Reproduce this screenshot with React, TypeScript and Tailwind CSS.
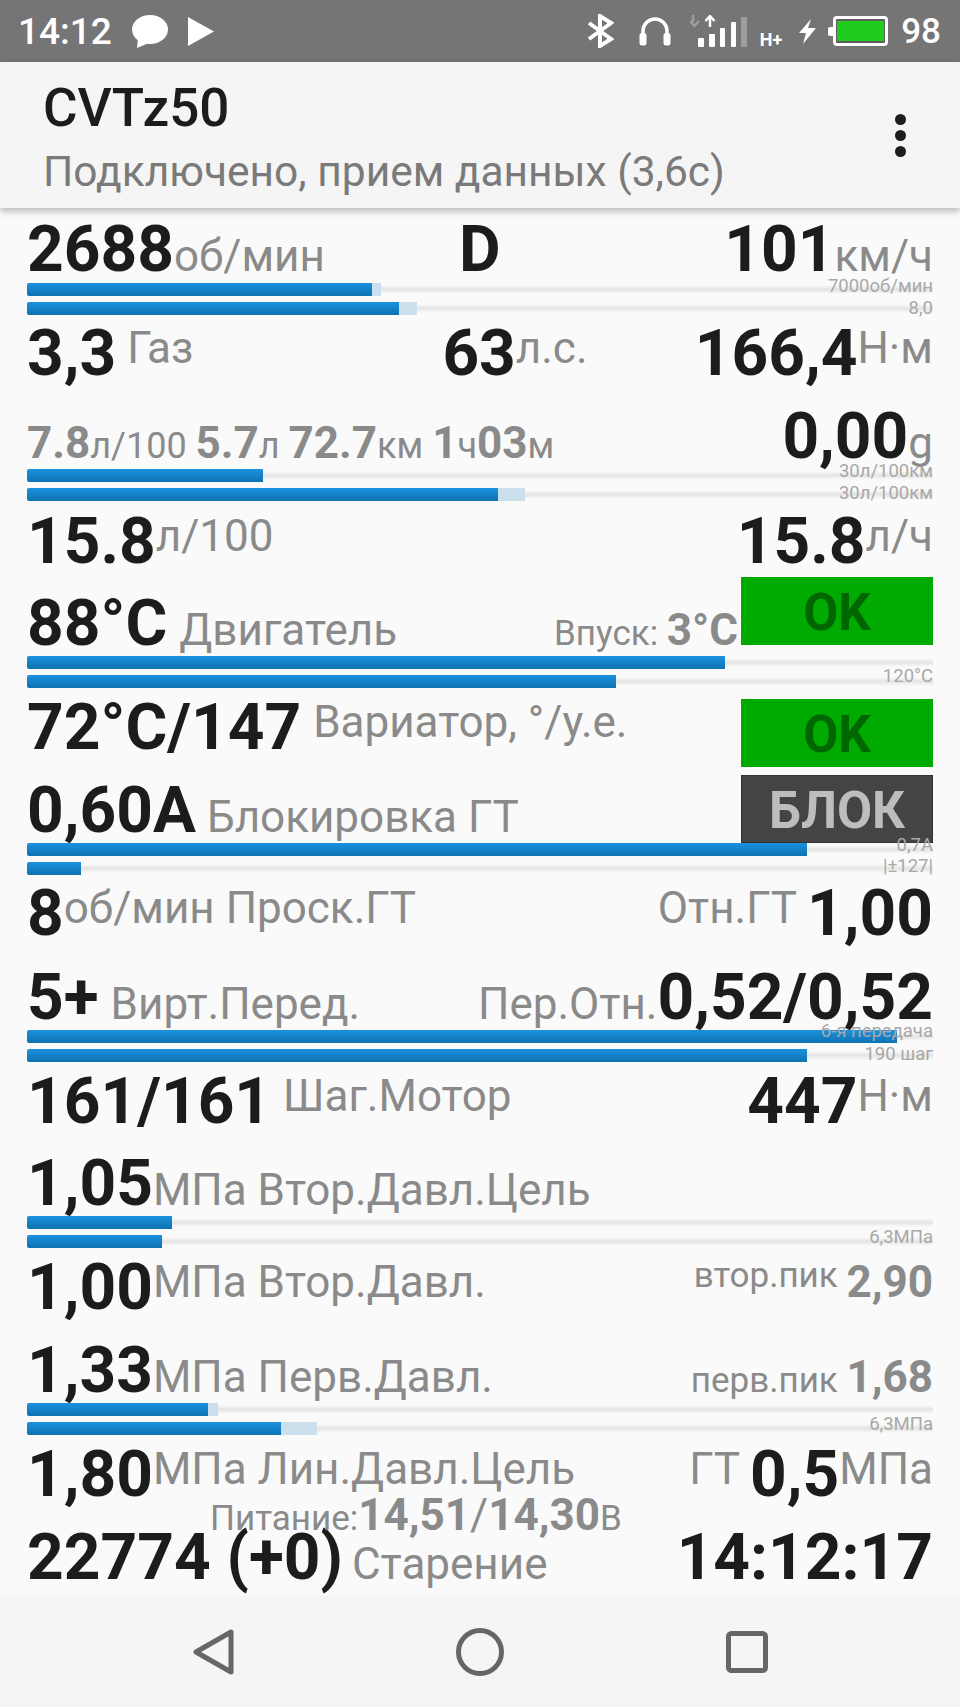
import type { ReactNode } from "react";

type BarData = {
  value: number;
  ghost?: number;
  label?: string;
  labelClass?: string;
};

const Big = ({ children }: { children: ReactNode }) => (
  <span className="text-[64px] font-bold text-[#1c1c1c] whitespace-pre">{children}</span>
);

const Unit = ({ children, className = "" }: { children: ReactNode; className?: string }) => (
  <span className={`text-[44px] text-[#8a8a8a] whitespace-pre ${className}`}>{children}</span>
);

const Mid = ({ children, className = "" }: { children: ReactNode; className?: string }) => (
  <span className={`text-[44px] font-bold text-[#8a8a8a] whitespace-pre ${className}`}>{children}</span>
);

const Small = ({ children }: { children: ReactNode }) => (
  <span className="text-[36px] text-[#8a8a8a] whitespace-pre">{children}</span>
);

const Note = ({ children, className = "" }: { children: ReactNode; className?: string }) => (
  <span className={`text-[35px] text-[#8a8a8a] whitespace-pre ${className}`}>{children}</span>
);

const Row = ({ h, children }: { h: string; children: ReactNode }) => (
  <div className={`relative flex items-baseline pt-[2px] leading-[62px] ${h}`}>{children}</div>
);

const Bar = ({ value, ghost, label, labelClass = "bottom-0" }: BarData) => (
  <div className="relative h-[13px]">
    <div className="absolute inset-x-0 top-[2px] h-[9px] bg-linear-to-b from-transparent via-[#e4e4e4] to-transparent" />
    {ghost && (
      <div className="absolute left-0 top-0 h-full bg-[#cbdfec] rounded-l-[2px]" style={{ width: ghost }} />
    )}
    <div
      className="absolute left-0 top-0 h-full rounded-l-[2px] bg-linear-to-b from-[#1b92de] to-[#0f72b2]"
      style={{ width: value }}
    />
    {label && (
      <span className={`absolute right-0 text-[18.5px] leading-[19px] text-[#a8a8a8] whitespace-pre ${labelClass}`}>
        {label}
      </span>
    )}
  </div>
);

const Bars = ({ h, top, bottom }: { h: string; top: BarData; bottom: BarData }) => (
  <div className={h}>
    <Bar {...top} />
    <div className="mt-[5.5px]">
      <Bar {...bottom} />
    </div>
  </div>
);

const Badge = ({ text, className }: { text: string; className: string }) => (
  <div
    className={`absolute right-0 flex h-[68px] w-[192px] items-center justify-center pt-[3px] text-[51px] leading-none font-bold ${className}`}
  >
    {text}
  </div>
);

const StatusIcons = () => (
  <div className="ml-auto flex items-center pr-[19px]">
    {/* bluetooth */}
    <svg width="27" height="34" viewBox="0 0 27 34" fill="none" stroke="#fff" strokeWidth="4">
      <path d="M2 9 L24 25 L13 32 V2 L24 9 L2 25" strokeLinejoin="miter" />
    </svg>
    {/* headphones */}
    <svg className="ml-[25px]" width="32" height="30" viewBox="0 0 32 30" fill="none">
      <path d="M4 20 V15 A12 12 0 0 1 28 15 V20" stroke="#fff" strokeWidth="3.5" />
      <rect x="0.5" y="17" width="7" height="12.5" rx="2.5" fill="#fff" />
      <rect x="24.5" y="17" width="7" height="12.5" rx="2.5" fill="#fff" />
    </svg>
    {/* signal with up and down arrows */}
    <svg className="ml-[19px]" width="57" height="32" viewBox="0 0 57 32">
      <path d="M3 0 V7 M0 6 L4.5 11 L9 6" stroke="#9d9d9d" strokeWidth="2.5" fill="none" />
      <path d="M20 12 V3 M15.5 6 L20 1 L24.5 6" stroke="#fff" strokeWidth="2.5" fill="none" />
      <rect x="8" y="23" width="6" height="9" rx="1" fill="#fff" />
      <rect x="19" y="19" width="6" height="13" rx="1" fill="#fff" />
      <rect x="30" y="13" width="5" height="19" rx="1" fill="#fff" />
      <rect x="41" y="7" width="5" height="25" rx="1" fill="#fff" />
      <rect x="51" y="2" width="6" height="30" rx="1" fill="#9d9d9d" />
    </svg>
    <span className="ml-[13px] mt-[16px] text-[18px] leading-[17px] font-bold text-white">H+</span>
    {/* charging bolt */}
    <svg className="ml-[17px]" width="17" height="25" viewBox="0 0 17 25" fill="#fff">
      <path d="M12 0 L0 14 H7 L4 25 L17 9 H9 Z" />
    </svg>
    {/* battery */}
    <div className="ml-[12px] flex items-center">
      <div className="h-[9px] w-[5px] rounded-l-[2px] bg-white" />
      <div className="flex h-[30px] w-[55px] items-center rounded-[4px] border-[3px] border-white bg-[#5e5e5e] pl-[1px]">
        <div className="h-[20px] w-[47px] bg-[#22cc1c]" />
      </div>
    </div>
    <span className="ml-[13px] text-[35px] leading-none font-medium text-white">98</span>
  </div>
);

const App = () => (
  <div className="flex h-[1707px] w-[960px] flex-col overflow-hidden bg-[#fafafa] font-['Roboto',sans-serif]">
    <div className="flex h-[62px] items-center bg-[#757575] pl-[18px]">
      <span className="text-[37px] leading-none font-medium text-white">14:12</span>
      <svg className="ml-[20px]" width="36" height="33" viewBox="0 0 36 33" fill="#fff">
        <ellipse cx="18" cy="14.5" rx="18" ry="14.5" />
        <path d="M6 23 L5 33 L17 28 Z" />
      </svg>
      <svg className="ml-[20px]" width="26" height="29" viewBox="0 0 26 29" fill="#fff">
        <path d="M0 0 L26 14.5 L0 29 Z" />
      </svg>
      <StatusIcons />
    </div>

    <div className="relative z-10 flex h-[146px] items-center justify-between bg-[#f5f5f5] pl-[43px] pr-[54px] shadow-[0_3px_7px_rgba(0,0,0,0.28)]">
      <div className="mt-[2px]">
        <div className="text-[53px] leading-[62px] font-medium text-[#1c1c1c]">CVTz50</div>
        <div className="mt-[9px] text-[42.5px] leading-[48px] text-[#7a7a7a] whitespace-pre">
          Подключено, прием данных (3,6с)
        </div>
      </div>
      <div className="flex flex-col gap-[5px]">
        <div className="size-[11px] rounded-full bg-[#1c1c1c]" />
        <div className="size-[11px] rounded-full bg-[#1c1c1c]" />
        <div className="size-[11px] rounded-full bg-[#1c1c1c]" />
      </div>
    </div>

    <div className="flex-1 px-[27px] pt-[9px]">
      <Row h="h-[66px]">
        <Big>2688</Big>
        <Unit>об/мин</Unit>
        <span className="ml-[134px]">
          <Big>D</Big>
        </span>
        <span className="ml-auto">
          <Big>101</Big>
        </span>
        <Unit>км/ч</Unit>
      </Row>
      <Bars
        h="h-[38px]"
        top={{ value: 345, ghost: 354, label: "7000об/мин" }}
        bottom={{ value: 372, ghost: 390, label: "8,0", labelClass: "bottom-[-3px]" }}
      />

      <Row h="h-[83px]">
        <Big>3,3</Big>
        <Unit className="ml-[11px] -translate-y-[12px]">Газ</Unit>
        <span className="ml-[249px]">
          <Big>63</Big>
        </span>
        <Unit className="-translate-y-[12px]">л.с.</Unit>
        <span className="ml-auto">
          <Big>166,4</Big>
        </span>
        <Unit className="-translate-y-[12px]">Н·м</Unit>
      </Row>
      <Row h="h-[65px]">
        <Mid>7.8</Mid>
        <Small>л/100 </Small>
        <Mid>5.7</Mid>
        <Small>л </Small>
        <Mid>72.7</Mid>
        <Small>км </Small>
        <Mid>1</Mid>
        <Small>ч</Small>
        <Mid>03</Mid>
        <Small>м</Small>
        <span className="ml-auto">
          <Big>0,00</Big>
        </span>
        <Unit>g</Unit>
      </Row>
      <Bars
        h="h-[40px]"
        top={{ value: 236, label: "30л/100км", labelClass: "bottom-[1px]" }}
        bottom={{ value: 471, ghost: 498, label: "30л/100км", labelClass: "bottom-[-2px]" }}
      />

      <Row h="h-[82px]">
        <Big>15.8</Big>
        <Unit className="-translate-y-[12px]">л/100</Unit>
        <span className="ml-auto">
          <Big>15.8</Big>
        </span>
        <Unit className="-translate-y-[12px]">л/ч</Unit>
      </Row>
      <Row h="h-[65px]">
        <Big>88°C</Big>
        <Unit className="ml-[12px]">Двигатель</Unit>
        <Note className="ml-auto">Впуск: </Note>
        <span className="mr-[195px] text-[44px] font-bold text-[#8a8a8a]">3°C</span>
        <Badge text="OK" className="top-[-14px] bg-[#00aa00] text-[#006600]" />
      </Row>
      <Bars
        h="h-[39px]"
        top={{ value: 698 }}
        bottom={{ value: 589, label: "120°C", labelClass: "bottom-[2px]" }}
      />

      <Row h="h-[83px]">
        <Big>72°C/147</Big>
        <Unit className="ml-[12px] -translate-y-[12px]">Вариатор, °/у.е.</Unit>
        <Badge text="OK" className="top-[4px] bg-[#00aa00] text-[#006600]" />
      </Row>
      <Row h="h-[65px]">
        <Big>0,60A</Big>
        <Unit className="ml-[11px]">Блокировка ГТ</Unit>
        <Badge text="БЛОК" className="top-[-3px] border border-[#333333] bg-[#444444] text-[#bdbdbd]" />
      </Row>
      <Bars
        h="h-[38px]"
        top={{ value: 780, label: "0,7A", labelClass: "bottom-[1px]" }}
        bottom={{ value: 54, label: "|±127|", labelClass: "bottom-[-1px]" }}
      />

      <Row h="h-[84px]">
        <Big>8</Big>
        <Unit className="-translate-y-[12px]">об/мин Проск.ГТ</Unit>
        <Unit className="ml-auto -translate-y-[12px]">Отн.ГТ </Unit>
        <Big>1,00</Big>
      </Row>
      <Row h="h-[65px]">
        <Big>5+</Big>
        <Unit className="ml-[12px]">Вирт.Перед.</Unit>
        <Unit className="ml-auto">Пер.Отн.</Unit>
        <Big>0,52/0,52</Big>
      </Row>
      <Bars
        h="h-[39px]"
        top={{ value: 870, label: "6-я передача", labelClass: "bottom-[2px]" }}
        bottom={{ value: 780, label: "190 шаг", labelClass: "bottom-[-2px]" }}
      />

      <Row h="h-[82px]">
        <Big>161/161</Big>
        <Unit className="ml-[12px] -translate-y-[12px]">Шаг.Мотор</Unit>
        <span className="ml-auto">
          <Big>447</Big>
        </span>
        <Unit className="-translate-y-[12px]">Н·м</Unit>
      </Row>
      <Row h="h-[65px]">
        <Big>1,05</Big>
        <Unit>МПа Втор.Давл.Цель</Unit>
      </Row>
      <Bars
        h="h-[39px]"
        top={{ value: 145 }}
        bottom={{ value: 135, label: "6,3МПа", labelClass: "bottom-[1px]" }}
      />

      <Row h="h-[83px]">
        <Big>1,00</Big>
        <Unit className="-translate-y-[12px]">МПа Втор.Давл.</Unit>
        <Note className="ml-auto -translate-y-[22px]">втор.пик </Note>
        <Mid className="-translate-y-[12px]">2,90</Mid>
      </Row>
      <Row h="h-[65px]">
        <Big>1,33</Big>
        <Unit>МПа Перв.Давл.</Unit>
        <Note className="ml-auto">перв.пик </Note>
        <Mid>1,68</Mid>
      </Row>
      <Bars
        h="h-[39px]"
        top={{ value: 181, ghost: 191 }}
        bottom={{ value: 254, ghost: 290, label: "6,3МПа", labelClass: "bottom-[1px]" }}
      />

      <Row h="h-[83px]">
        <Big>1,80</Big>
        <Unit className="-translate-y-[12px]">МПа Лин.Давл.Цель</Unit>
        <Unit className="ml-auto -translate-y-[12px]">ГТ </Unit>
        <Big>0,5</Big>
        <Unit className="-translate-y-[12px]">МПа</Unit>
      </Row>
      <Row h="h-[71px]">
        <Big>22774 (+0)</Big>
        <Unit className="ml-[9px]">Старение</Unit>
        <span className="ml-auto">
          <Big>14:12:17</Big>
        </span>
        <div className="absolute left-[183px] top-[-35px] flex items-baseline leading-[50px]">
          <span className="text-[35px] text-[#8a8a8a]">Питание:</span>
          <Mid>14,51</Mid>
          <span className="text-[44px] text-[#8a8a8a]">/</span>
          <Mid>14,30</Mid>
          <span className="text-[35px] text-[#8a8a8a]">В</span>
        </div>
      </Row>
    </div>

    <div className="flex h-[111px] items-center bg-[#f5f5f5] pl-[193px]">
      <svg width="41" height="46" viewBox="0 0 41 46" fill="none" stroke="#666" strokeWidth="5" strokeLinejoin="round">
        <path d="M38 3 V43 L3 23 Z" />
      </svg>
      <svg className="ml-[222px]" width="48" height="48" viewBox="0 0 48 48" fill="none" stroke="#666" strokeWidth="5">
        <circle cx="24" cy="24" r="21.5" />
      </svg>
      <svg className="ml-[222px]" width="42" height="42" viewBox="0 0 42 42" fill="none" stroke="#666" strokeWidth="5">
        <rect x="2.5" y="2.5" width="37" height="37" rx="3" />
      </svg>
    </div>
  </div>
);

export default App;
